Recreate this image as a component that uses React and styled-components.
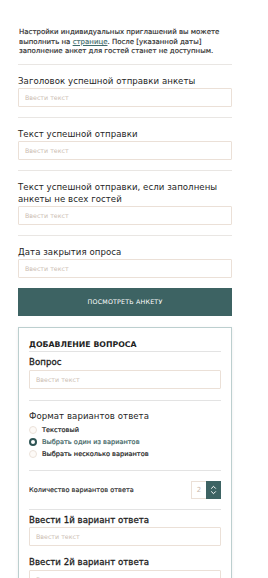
import React from "react";
import styled, { createGlobalStyle } from "styled-components";

const Global = createGlobalStyle`
  body {
    margin: 0;
    background: #fff;
    font-family: "DejaVu Sans", "Noto Sans", sans-serif;
    color: #222;
  }
`;

const Page = styled.main`
  width: 214px;
  padding: 28px 0 0 18px;
`;

const Intro = styled.p`
  margin: 0 0 0 1px;
  font-size: 7px;
  line-height: 9.6px;
  color: #2a2a2a;
  -webkit-text-stroke: 0.15px #2a2a2a;
  a {
    color: #3d6b6b;
    -webkit-text-stroke: 0.15px #3d6b6b;
    text-decoration: underline;
  }
`;

const Divider = styled.hr`
  border: 0;
  border-top: 1px solid ${(p) => (p.$strong ? "#e3e3e3" : "#e9e6e3")};
  margin: ${(p) => p.$m || "10px 0 0"};
`;

const Field = styled.div`
  display: flex;
  flex-direction: column;
  gap: ${(p) => p.$gap || "1px"};
  padding-top: ${(p) => p.$top || "10px"};
`;

const Label = styled.label`
  font-size: ${(p) => (p.$small ? "6.5px" : "8.6px")};
  line-height: 12px;
  letter-spacing: 0.05px;
  color: #1e1e1e;
  -webkit-text-stroke: ${(p) => (p.$bold ? "0.3px #1e1e1e" : p.$small ? "0.15px #1e1e1e" : "0")};
`;

const Input = styled.input`
  box-sizing: border-box;
  width: 100%;
  height: 19px;
  border: 1px solid #ebe0d7;
  border-radius: 1px;
  padding: 0 6px;
  font-family: inherit;
  font-size: 6.3px;
  background: #fff;
  outline: none;
  &::placeholder {
    color: #cbbbb0;
  }
`;

const Button = styled.button`
  display: block;
  margin-top: 10px;
  width: 100%;
  height: 28px;
  border: 0;
  background: #3d6363;
  color: #fff;
  font-family: inherit;
  font-size: 6.3px;
  letter-spacing: 0.2px;
  text-transform: uppercase;
`;

const Card = styled.section`
  margin-top: 11px;
  border: 1px solid #bccfcf;
  box-shadow: 0 1px 3px rgba(0, 0, 0, 0.08);
  padding: 11px 10px 24px;
`;

const CardTitle = styled.h2`
  margin: 0;
  font-size: 7.8px;
  line-height: 12px;
  font-weight: 700;
  text-transform: uppercase;
  color: #1e1e1e;
`;

const Options = styled.div`
  display: flex;
  flex-direction: column;
  gap: 3px;
`;

const Option = styled.label`
  display: flex;
  align-items: center;
  gap: 5px;
  height: 9px;
  font-size: 6.6px;
  color: ${(p) => (p.$on ? "#3d6363" : "#222")};
  -webkit-text-stroke: 0.2px ${(p) => (p.$on ? "#3d6363" : "#222")};
`;

const Dot = styled.span`
  box-sizing: border-box;
  width: 8px;
  height: 8px;
  border-radius: 50%;
  border: ${(p) => (p.$on ? "2.5px solid #2f5555" : "1px solid #ece2da")};
  background: ${(p) => (p.$on ? "#fff" : "#fdfaf7")};
`;

const CountRow = styled.div`
  display: flex;
  align-items: center;
  justify-content: space-between;
  padding: 10px 0;
`;

const Spin = styled.div`
  display: flex;
  height: 18px;
`;

const SpinValue = styled.span`
  box-sizing: border-box;
  width: 15px;
  border: 1px solid #ebe0d7;
  border-right: 0;
  display: flex;
  align-items: center;
  justify-content: center;
  font-size: 7px;
  color: #c9b8ac;
`;

const SpinArrows = styled.span`
  width: 15px;
  background: #3d6363;
  display: flex;
  align-items: center;
  justify-content: center;
`;

export default function App() {
  return (
    <>
      <Global />
      <Page>
        <Intro>
          Настройки индивидуальных приглашений вы можете выполнить на{" "}
          <a href="#">странице</a>. После [указанной даты] заполнение анкет для
          гостей станет не доступным.
        </Intro>
        <Divider $m="7px 0 0" />
        <Field>
          <Label>Заголовок успешной отправки анкеты</Label>
          <Input placeholder="Ввести текст" />
        </Field>
        <Divider />
        <Field>
          <Label>Текст успешной отправки</Label>
          <Input placeholder="Ввести текст" />
        </Field>
        <Divider />
        <Field>
          <Label>Текст успешной отправки, если заполнены анкеты не всех гостей</Label>
          <Input placeholder="Ввести текст" />
        </Field>
        <Divider />
        <Field>
          <Label>Дата закрытия опроса</Label>
          <Input placeholder="Ввести текст" />
        </Field>
        <Button>Посмотреть анкету</Button>
        <Card>
          <CardTitle>Добавление вопроса</CardTitle>
          <Divider $strong $m="0" />
          <Field $top="4px" $gap="2px">
            <Label $bold>Вопрос</Label>
            <Input placeholder="Ввести текст" />
          </Field>
          <Divider $strong $m="11px 0 0" />
          <Field $top="9px" $gap="4px">
            <Label>Формат вариантов ответа</Label>
            <Options>
              <Option>
                <Dot />
                Текстовый
              </Option>
              <Option $on>
                <Dot $on />
                Выбрать один из вариантов
              </Option>
              <Option>
                <Dot />
                Выбрать несколько вариантов
              </Option>
            </Options>
          </Field>
          <Divider $strong $m="11px 0 0" />
          <CountRow>
            <Label $small>Количество вариантов ответа</Label>
            <Spin>
              <SpinValue>2</SpinValue>
              <SpinArrows>
                <svg width="7" height="10" viewBox="0 0 7 10" fill="none">
                  <path d="M1.2 3.6 3.5 1.3 5.8 3.6M1.2 6.4 3.5 8.7 5.8 6.4" stroke="#fff" strokeWidth="1" />
                </svg>
              </SpinArrows>
            </Spin>
          </CountRow>
          <Divider $strong $m="0" />
          <Field $top="4px">
            <Label $bold>Ввести 1й вариант ответа</Label>
            <Input placeholder="Ввести текст" />
          </Field>
          <Field $top="10px" $gap="2px">
            <Label $bold>Ввести 2й вариант ответа</Label>
            <Input placeholder="Ввести текст" />
          </Field>
        </Card>
      </Page>
    </>
  );
}
